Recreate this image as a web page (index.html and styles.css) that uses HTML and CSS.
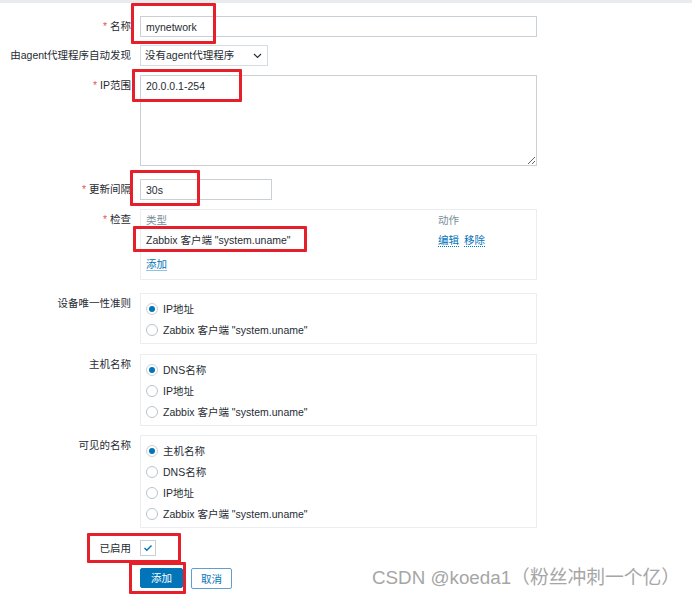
FILE: index.html
```html
<!DOCTYPE html>
<html lang="zh-CN">
<head>
<meta charset="utf-8">
<title>发现规则</title>
<link rel="stylesheet" href="styles.css">
</head>
<body>
<div class="topbar"></div>
<form class="form">
  <div class="row gap-8">
    <label class="lbl"><span class="req">*</span> 名称</label>
    <input class="input wide" type="text" value="mynetwork">
  </div>
  <div class="row gap-9">
    <label class="lbl">由agent代理程序自动发现</label>
    <div class="select">
      <span>没有agent代理程序</span>
      <svg class="chev" width="9" height="6" viewBox="0 0 9 6"><polyline points="1,1 4.5,4.5 8,1" fill="none" stroke="#1f2c33" stroke-width="1.1"/></svg>
    </div>
  </div>
  <div class="row gap-13">
    <label class="lbl"><span class="req">*</span> IP范围</label>
    <textarea class="textarea">20.0.0.1-254</textarea>
  </div>
  <div class="row gap-9">
    <label class="lbl"><span class="req">*</span> 更新间隔</label>
    <input class="input short" type="text" value="30s">
  </div>
  <div class="row gap-13">
    <label class="lbl"><span class="req">*</span> 检查</label>
    <div class="box checks">
      <div class="th">类型</div>
      <div class="th">动作</div>
      <div class="td">Zabbix 客户端 "system.uname"</div>
      <div class="td actions"><a class="link">编辑</a><a class="link">移除</a></div>
      <div class="td add"><a class="link">添加</a></div>
    </div>
  </div>
  <div class="row gap-10">
    <label class="lbl">设备唯一性准则</label>
    <div class="box radios">
      <div class="opt"><span class="radio on"></span>IP地址</div>
      <div class="opt"><span class="radio"></span>Zabbix 客户端 "system.uname"</div>
    </div>
  </div>
  <div class="row gap-9">
    <label class="lbl">主机名称</label>
    <div class="box radios">
      <div class="opt"><span class="radio on"></span>DNS名称</div>
      <div class="opt"><span class="radio"></span>IP地址</div>
      <div class="opt"><span class="radio"></span>Zabbix 客户端 "system.uname"</div>
    </div>
  </div>
  <div class="row gap-12">
    <label class="lbl">可见的名称</label>
    <div class="box radios">
      <div class="opt"><span class="radio on"></span>主机名称</div>
      <div class="opt"><span class="radio"></span>DNS名称</div>
      <div class="opt"><span class="radio"></span>IP地址</div>
      <div class="opt"><span class="radio"></span>Zabbix 客户端 "system.uname"</div>
    </div>
  </div>
  <div class="row gap-12">
    <label class="lbl lbl-check">已启用</label>
    <div class="checkbox">
      <svg width="10" height="8" viewBox="0 0 10 8"><polyline points="1.5,4 3.8,6.3 8.5,1.5" fill="none" stroke="#0275b8" stroke-width="1.4"/></svg>
    </div>
  </div>
  <div class="row">
    <span></span>
    <div class="buttons">
      <button type="button" class="btn primary">添加</button>
      <button type="button" class="btn alt">取消</button>
    </div>
  </div>
</form>

<div class="mark m1"></div>
<div class="mark m2"></div>
<div class="mark m3"></div>
<div class="mark m4"></div>
<div class="mark m5"></div>
<div class="mark m6"></div>

<div class="watermark">CSDN @koeda1（粉丝冲刺一个亿）</div>
</body>
</html>
```
FILE: styles.css
```css
* { box-sizing: border-box; }
html, body { margin: 0; padding: 0; background: #ffffff; }
body {
  position: relative;
  width: 692px;
  height: 597px;
  overflow: hidden;
  font-family: "Liberation Sans", Arial, "Noto Sans CJK SC", sans-serif;
  font-size: 10.5px;
  color: #1f2c33;
}
.topbar { height: 3px; background: #e8ecef; }
.form { padding-top: 13px; }

.row {
  display: grid;
  grid-template-columns: 131px 397px;
  column-gap: 9px;
  align-items: start;
}
.gap-8 { margin-bottom: 8px; }
.gap-9 { margin-bottom: 9px; }
.gap-10 { margin-bottom: 10px; }
.gap-12 { margin-bottom: 12px; }
.gap-13 { margin-bottom: 13px; }

.lbl {
  text-align: right;
  padding-top: 3px;
  height: 17px;
  line-height: 14px;
  white-space: nowrap;
}
.lbl-check { padding-top: 1px; height: 16px; }
.req { color: #e45959; }

.input, .textarea {
  font-family: inherit;
  font-size: 10.5px;
  color: #1f2c33;
  border: 1px solid #c9d1d7;
  background: #fff;
  outline: none;
  margin: 0;
}
.input { height: 21px; padding: 0 5px; line-height: 19px; }
.wide { width: 397px; }
.short { width: 132px; }
.textarea {
  display: block;
  width: 397px;
  height: 91px;
  padding: 3px 5px;
  line-height: 14px;
  resize: both;
}

.select {
  width: 128px;
  height: 21px;
  border: 1px solid #d5dce1;
  display: flex;
  align-items: center;
  justify-content: space-between;
  padding: 0 5px 0 4px;
  line-height: 19px;
}
.chev { display: block; }

.box { border: 1px solid #ebeef0; background: #fff; }

.checks {
  display: grid;
  grid-template-columns: 292px auto;
  grid-template-rows: 14px 14px 14px;
  height: 71px;
  padding: 3px 5px 0;
  line-height: 14px;
  row-gap: 6px;
}
.th, .td { height: 14px; overflow: visible; white-space: nowrap; }
.th { color: #768d99; }
.actions { display: flex; gap: 5px; }
.add { grid-column: 1 / 3; margin-top: 4px; }
.link {
  color: #0275b8;
  text-decoration: none;
  border-bottom: 1px dotted #0275b8;
}
.add .link { border-bottom-style: solid; border-bottom-color: #8fc0df; }

.radios { padding: 4px 5px 3px; }
.opt {
  display: flex;
  align-items: center;
  height: 21px;
  white-space: nowrap;
  overflow: hidden;
}
.radio {
  width: 12px;
  height: 12px;
  border: 1px solid #b9c4cb;
  border-radius: 50%;
  margin-right: 5px;
  position: relative;
  flex: none;
}
.radio.on { border-color: #c9d1d7; }
.radio.on::after {
  content: "";
  position: absolute;
  left: 2px; top: 2px;
  width: 6px; height: 6px;
  border-radius: 50%;
  background: #0275b8;
}

.checkbox {
  width: 16px;
  height: 16px;
  border: 1px solid #c9d1d7;
  display: flex;
  align-items: center;
  justify-content: center;
}
.checkbox svg { display: block; }

.buttons { display: flex; gap: 8px; align-items: flex-start; }
.btn {
  font-family: inherit;
  font-size: 10.5px;
  height: 20px;
  padding: 0;
  margin: 0;
  line-height: 18px;
  text-align: center;
  white-space: nowrap;
  border-radius: 2px;
  cursor: pointer;
}
.primary { width: 43px; background: #0275b8; border: 1px solid #0275b8; color: #fff; }
.alt { width: 41px; height: 21px; background: #fff; border: 1px solid #5e9fd0; color: #0275b8; }

.mark {
  position: absolute;
  border: 3px solid #e5202a;
  border-radius: 1px;
  pointer-events: none;
}
.m1 { left: 131px; top: 3px; width: 85px; height: 41px; }
.m2 { left: 132px; top: 69px; width: 110px; height: 33px; }
.m3 { left: 130px; top: 170px; width: 70px; height: 36px; }
.m4 { left: 133px; top: 226px; width: 174px; height: 26px; }
.m5 { left: 87px; top: 533px; width: 94px; height: 30px; }
.m6 { left: 129px; top: 562px; width: 57px; height: 32px; }

.watermark {
  position: absolute;
  left: 372px;
  top: 567px;
  font-size: 18.8px;
  line-height: 22px;
  color: #a6a6a6;
  white-space: nowrap;
  font-family: "Liberation Sans", Arial, "Noto Sans CJK SC", sans-serif;
}
```
